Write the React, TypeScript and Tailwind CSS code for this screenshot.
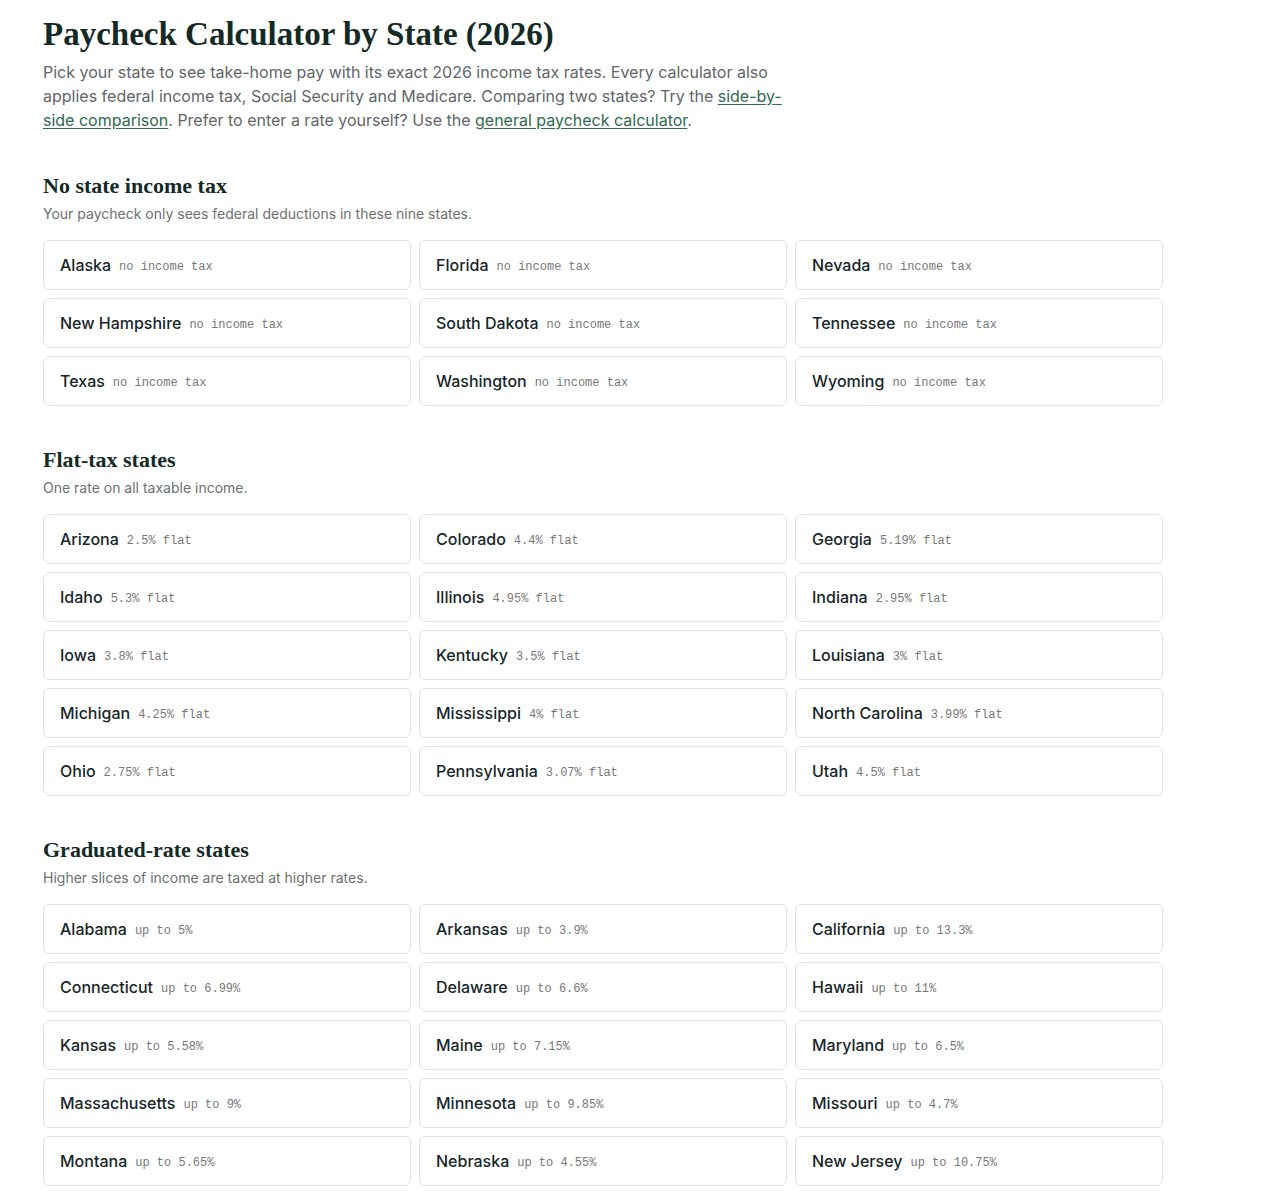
import React from 'react';

type StateRow = { name: string; note: string };

const noTax: StateRow[] = [
  { name: 'Alaska', note: 'no income tax' },
  { name: 'Florida', note: 'no income tax' },
  { name: 'Nevada', note: 'no income tax' },
  { name: 'New Hampshire', note: 'no income tax' },
  { name: 'South Dakota', note: 'no income tax' },
  { name: 'Tennessee', note: 'no income tax' },
  { name: 'Texas', note: 'no income tax' },
  { name: 'Washington', note: 'no income tax' },
  { name: 'Wyoming', note: 'no income tax' },
];

const flatTax: StateRow[] = [
  { name: 'Arizona', note: '2.5% flat' },
  { name: 'Colorado', note: '4.4% flat' },
  { name: 'Georgia', note: '5.19% flat' },
  { name: 'Idaho', note: '5.3% flat' },
  { name: 'Illinois', note: '4.95% flat' },
  { name: 'Indiana', note: '2.95% flat' },
  { name: 'Iowa', note: '3.8% flat' },
  { name: 'Kentucky', note: '3.5% flat' },
  { name: 'Louisiana', note: '3% flat' },
  { name: 'Michigan', note: '4.25% flat' },
  { name: 'Mississippi', note: '4% flat' },
  { name: 'North Carolina', note: '3.99% flat' },
  { name: 'Ohio', note: '2.75% flat' },
  { name: 'Pennsylvania', note: '3.07% flat' },
  { name: 'Utah', note: '4.5% flat' },
];

const graduated: StateRow[] = [
  { name: 'Alabama', note: 'up to 5%' },
  { name: 'Arkansas', note: 'up to 3.9%' },
  { name: 'California', note: 'up to 13.3%' },
  { name: 'Connecticut', note: 'up to 6.99%' },
  { name: 'Delaware', note: 'up to 6.6%' },
  { name: 'Hawaii', note: 'up to 11%' },
  { name: 'Kansas', note: 'up to 5.58%' },
  { name: 'Maine', note: 'up to 7.15%' },
  { name: 'Maryland', note: 'up to 6.5%' },
  { name: 'Massachusetts', note: 'up to 9%' },
  { name: 'Minnesota', note: 'up to 9.85%' },
  { name: 'Missouri', note: 'up to 4.7%' },
  { name: 'Montana', note: 'up to 5.65%' },
  { name: 'Nebraska', note: 'up to 4.55%' },
  { name: 'New Jersey', note: 'up to 10.75%' },
];

const serif = "font-['Liberation_Serif',Georgia,serif]";

function Section({ title, blurb, rows }: { title: string; blurb: string; rows: StateRow[] }) {
  return (
    <section className="mt-10">
      <h2 className={`${serif} text-[22px] leading-7 font-bold text-[#132a26]`}>{title}</h2>
      <p className="mt-1 text-sm leading-5 text-[#6b7170]">{blurb}</p>
      <div className="mt-4 grid grid-cols-3 gap-2">
        {rows.map((r) => (
          <a
            key={r.name}
            href="#"
            className="flex h-[50px] items-center gap-2 rounded-md border border-[#e3e3e0] bg-white px-4"
          >
            <span className="text-base font-medium text-[#16262a]">{r.name}</span>
            <span className="pt-1 font-['Liberation_Mono',monospace] text-xs text-[#787878]">{r.note}</span>
          </a>
        ))}
      </div>
    </section>
  );
}

export default function App() {
  return (
    <div className="min-h-screen bg-white font-['Inter',sans-serif]">
      <main className="ml-[43px] w-[1120px] pt-[14px] pb-10">
        <h1 className={`${serif} text-[33px] leading-10 font-bold text-[#132a26]`}>
          Paycheck Calculator by State (2026)
        </h1>
        <p className="mt-[6px] max-w-[745px] text-base leading-6 text-[#5f6668]">
          Pick your state to see take-home pay with its exact 2026 income tax rates. Every calculator also
          applies federal income tax, Social Security and Medicare. Comparing two states? Try the{' '}
          <a href="#" className="text-[#2e6a4f] underline underline-offset-2">
            side-by-side comparison
          </a>
          . Prefer to enter a rate yourself? Use the{' '}
          <a href="#" className="text-[#2e6a4f] underline underline-offset-2">
            general paycheck calculator
          </a>
          .
        </p>

        <Section
          title="No state income tax"
          blurb="Your paycheck only sees federal deductions in these nine states."
          rows={noTax}
        />
        <Section title="Flat-tax states" blurb="One rate on all taxable income." rows={flatTax} />
        <Section
          title="Graduated-rate states"
          blurb="Higher slices of income are taxed at higher rates."
          rows={graduated}
        />
      </main>
    </div>
  );
}
